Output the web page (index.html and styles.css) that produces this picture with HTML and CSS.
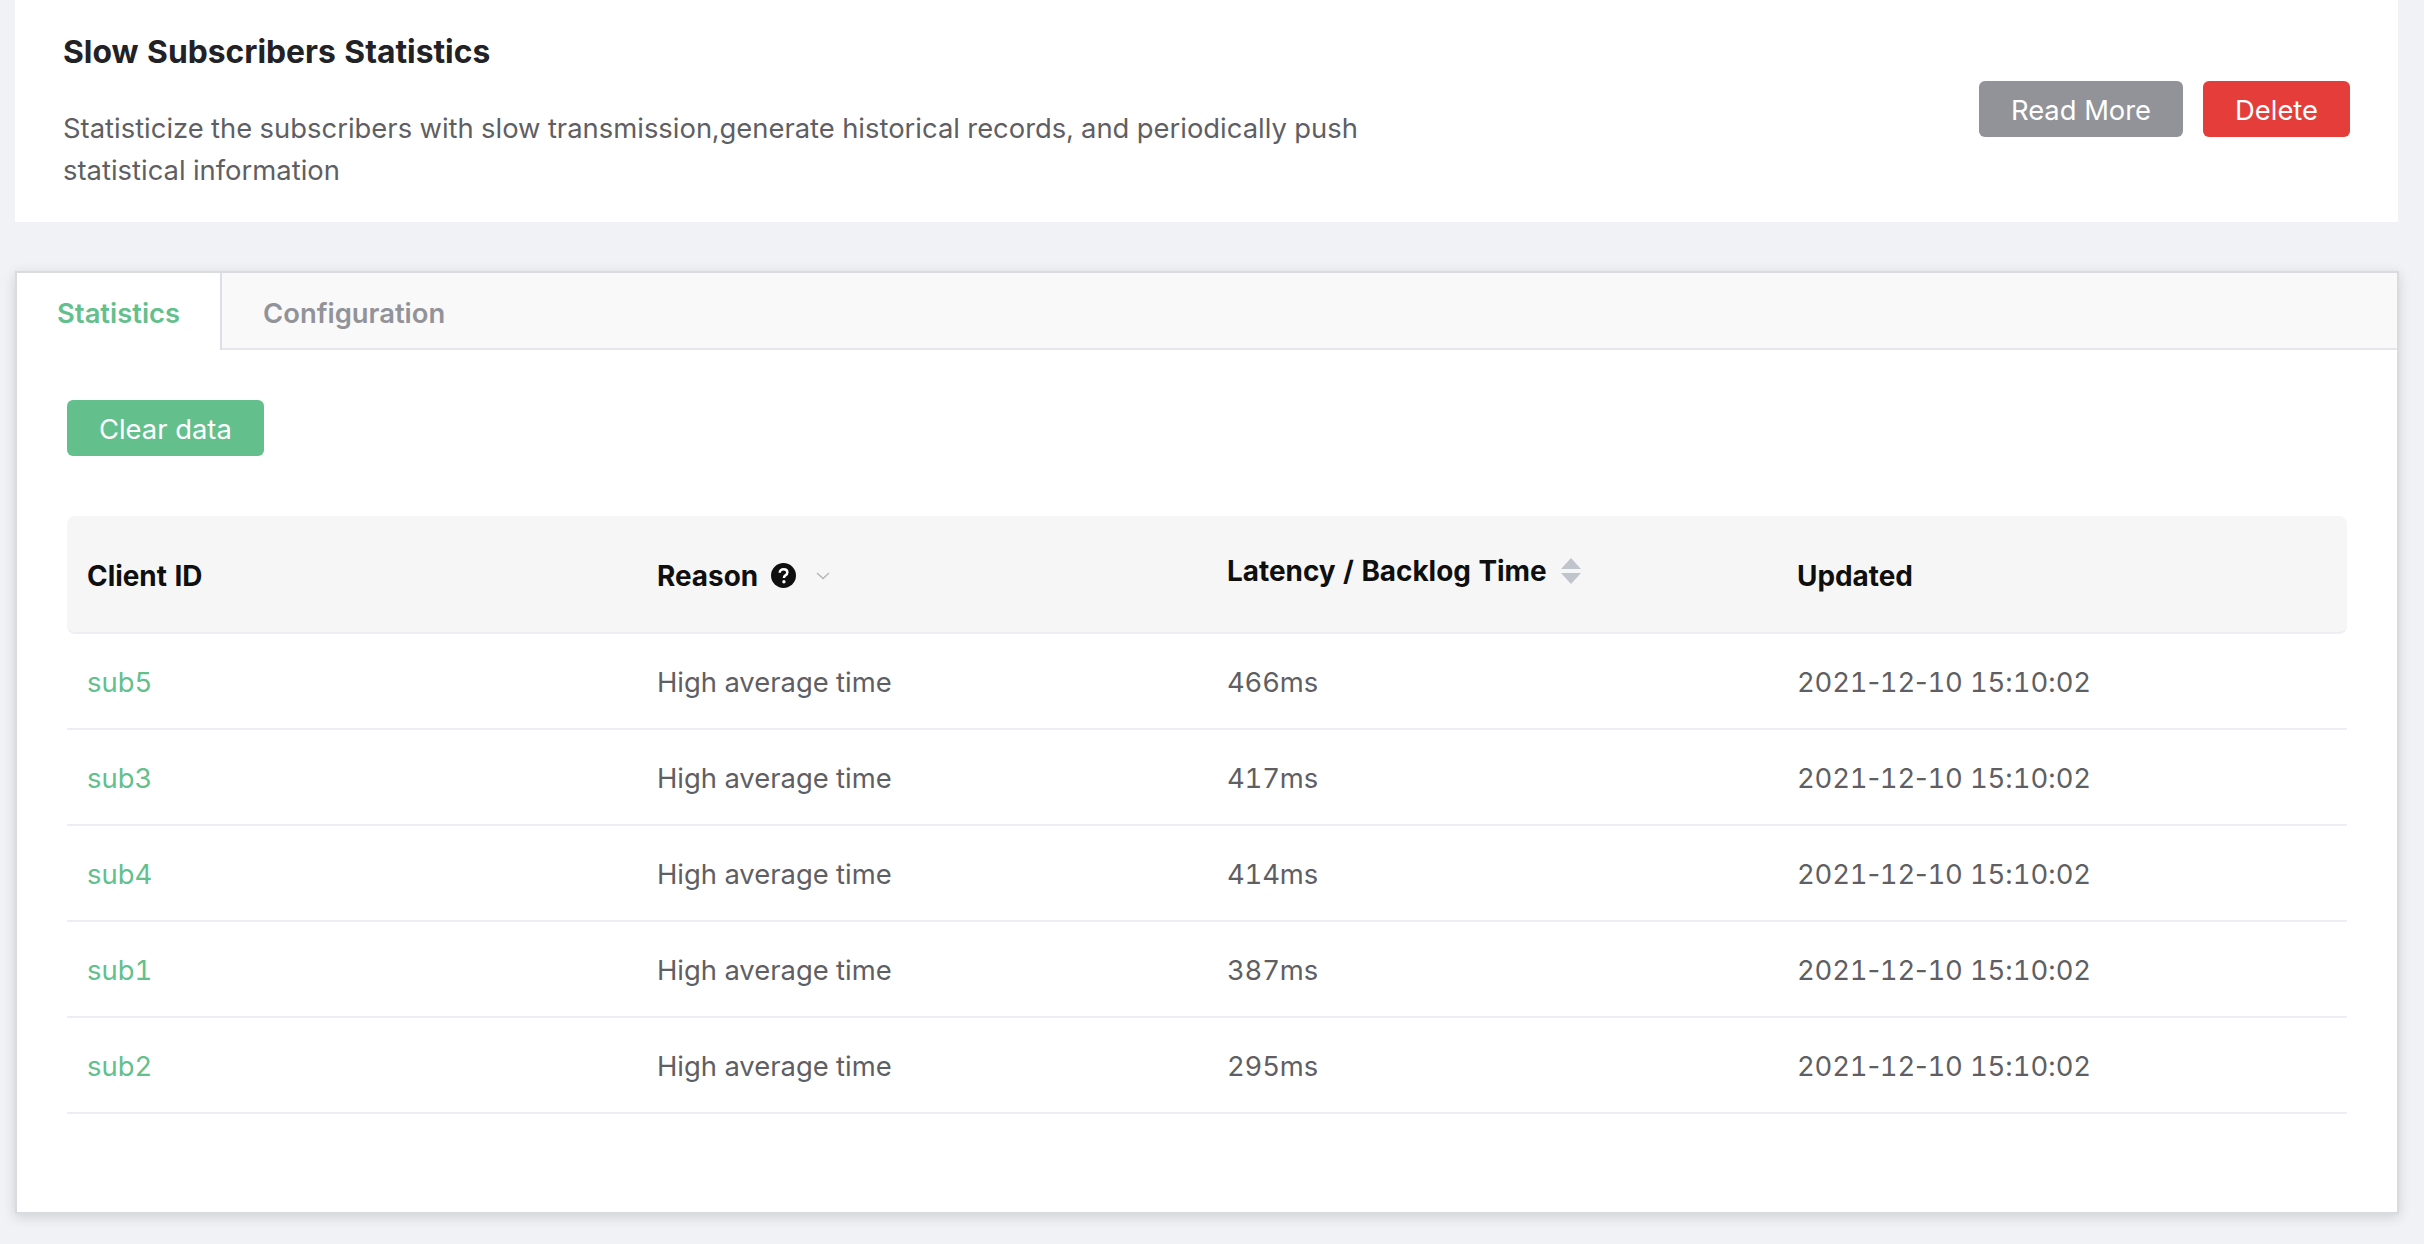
FILE: index.html
```html
<!DOCTYPE html>
<html lang="en">
<head>
<meta charset="utf-8">
<title>Slow Subscribers Statistics</title>
<link rel="stylesheet" href="styles.css">
</head>
<body>
<section class="intro">
  <div class="intro-text">
    <h1 class="intro-title">Slow Subscribers Statistics</h1>
    <p class="intro-desc">Statisticize the subscribers with slow transmission,generate historical records, and periodically push statistical information</p>
  </div>
  <div class="intro-actions">
    <button class="btn btn-gray">Read More</button>
    <button class="btn btn-red">Delete</button>
  </div>
</section>
<section class="tabs">
  <div class="tab-bar">
    <div class="tab tab-active">Statistics</div>
    <div class="tab">Configuration</div>
  </div>
  <div class="tab-body">
    <button class="btn btn-green">Clear data</button>
    <table class="data-table">
      <thead>
        <tr>
          <th>Client ID</th>
          <th>
            <span class="th-inner">Reason
              <svg class="icon-help" viewBox="0 0 24 24" aria-hidden="true"><circle cx="12" cy="12" r="12" fill="#0f0f0f"/><path d="M8.4 9.3c0-2 1.6-3.4 3.7-3.4s3.6 1.3 3.6 3.1c0 1.500-.9 2.200-1.900 2.900-.9.600-1.300 1.100-1.300 2.100v.4" fill="none" stroke="#fff" stroke-width="2.400"/><circle cx="12.400" cy="18" r="1.600" fill="#fff"/></svg>
              <svg class="icon-chevron" viewBox="0 0 14 8" aria-hidden="true"><path d="M1 1l6 5.500L13 1" fill="none" stroke="#b4b4b8" stroke-width="1.300"/></svg>
            </span>
          </th>
          <th class="th-raised">
            <span class="th-inner">Latency / Backlog Time
              <svg class="icon-sort" viewBox="0 0 20 26" aria-hidden="true"><path d="M10 0l10 11H0z" fill="#c0c4cc"/><path d="M10 26L0 15h20z" fill="#c0c4cc"/></svg>
            </span>
          </th>
          <th>Updated</th>
        </tr>
      </thead>
      <tbody>
        <tr><td><a class="client-link" href="#">sub5</a></td><td>High average time</td><td class="num">466ms</td><td class="num">2021<span class="sep">-</span>12<span class="sep">-</span>10 15<span class="sep">:</span>10<span class="sep">:</span>02</td></tr>
        <tr><td><a class="client-link" href="#">sub3</a></td><td>High average time</td><td class="num">417ms</td><td class="num">2021<span class="sep">-</span>12<span class="sep">-</span>10 15<span class="sep">:</span>10<span class="sep">:</span>02</td></tr>
        <tr><td><a class="client-link" href="#">sub4</a></td><td>High average time</td><td class="num">414ms</td><td class="num">2021<span class="sep">-</span>12<span class="sep">-</span>10 15<span class="sep">:</span>10<span class="sep">:</span>02</td></tr>
        <tr><td><a class="client-link" href="#">sub1</a></td><td>High average time</td><td class="num">387ms</td><td class="num">2021<span class="sep">-</span>12<span class="sep">-</span>10 15<span class="sep">:</span>10<span class="sep">:</span>02</td></tr>
        <tr><td><a class="client-link" href="#">sub2</a></td><td>High average time</td><td class="num">295ms</td><td class="num">2021<span class="sep">-</span>12<span class="sep">-</span>10 15<span class="sep">:</span>10<span class="sep">:</span>02</td></tr>
      </tbody>
    </table>
  </div>
</section>
</body>
</html>
```
FILE: styles.css
```css
* { box-sizing: border-box; }
html, body { height: 100%; }
body {
  margin: 0;
  background: #f0f2f6;
  font-family: Inter, "Liberation Sans", sans-serif;
  font-size: 27.42px;
  font-variant-numeric: tabular-nums;
  color: #5f5f63;
  overflow: hidden;
}
.intro {
  display: flex;
  justify-content: space-between;
  align-items: center;
  height: 222px;
  margin: 0 26px 0 15px;
  padding: 0 48px;
  background: #fff;
}
.intro-text { width: 1340px; }
.intro-title {
  margin: 0;
  padding-top: 31px;
  font-size: 31.8px;
  line-height: 42px;
  font-weight: 700;
  color: #222226;
}
.intro-desc {
  margin: 34px 0 31px;
  line-height: 42px;
}
.intro-actions {
  display: flex;
  gap: 20px;
  margin-bottom: 4px;
}
.btn {
  height: 56px;
  padding: 2px 32px 0;
  border: 0;
  border-radius: 6px;
  font-family: inherit;
  font-size: 27.36px;
  color: #fff;
}
.btn-gray { background: #929398; }
.btn-red { background: #e53d3a; }
.btn-green { display: block; background: #63c08c; }
.tabs {
  height: 943px;
  margin: 49px 25px 0 15px;
  border: 2px solid #d9dbdf;
  background: #fff;
  box-shadow: 0 3px 12px rgba(0, 0, 0, .14);
}
.tab-bar {
  display: flex;
  height: 77px;
  background: #f9f9fa;
  border-bottom: 2px solid #e6e7ea;
}
.tab {
  height: 77px;
  padding: 0 40px;
  line-height: 80px;
  font-weight: 600;
  color: #929398;
}
.tab-active {
  width: 205px;
  background: #fff;
  border-right: 2px solid #dcdfe3;
  color: #63c08c;
}
.tab-active + .tab { padding-left: 41px; }
.tab-body { padding: 50px 50px 0; }
.data-table {
  width: 2280px;
  margin-top: 60px;
  border-collapse: separate;
  border-spacing: 0;
  table-layout: fixed;
}
.data-table th {
  height: 118px;
  padding: 3px 20px 0;
  background: #f6f6f7;
  border-bottom: 2px solid #eceef4;
  color: #0f0f0f;
  font-size: 27.9px;
  font-weight: 700;
  text-align: left;
}
.data-table th:first-child { border-radius: 8px 0 0 8px; }
.data-table th:last-child { border-radius: 0 8px 8px 0; }
.th-raised .th-inner { position: relative; top: -5px; }
.th-inner { display: inline-flex; align-items: center; }
.icon-help { width: 25px; height: 25px; margin-left: 13px; }
.icon-chevron { width: 14px; height: 8px; margin-left: 20px; }
.icon-sort { width: 20px; height: 26px; margin-left: 14px; }
.data-table td {
  height: 96px;
  padding: 2px 20px 0;
  border-bottom: 2px solid #eceef4;
}
.data-table .num { letter-spacing: -0.17px; }
.client-link { color: #63c08c; text-decoration: none; }
.sep { font-variant-numeric: normal; }
```
